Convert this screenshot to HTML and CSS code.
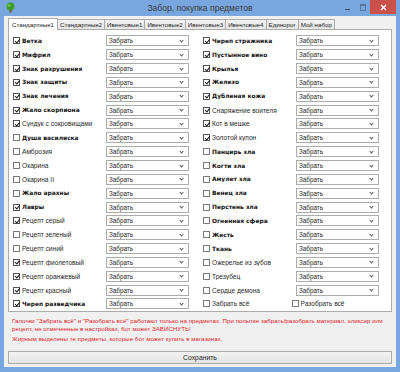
FILE: index.html
```html
<!DOCTYPE html>
<html lang="ru">
<head>
	<meta charset="UTF-8">
	<title>Забор, покупка предметов</title>
	<link rel="stylesheet" href="styles.css">
</head>

<body>
	<div class="window">
		<div class="titlebar">
			<svg class="app-icon" width="11" height="11" viewBox="0 0 11 11">
				<rect x="4.5" y="6.5" width="2" height="4" fill="#7a4a1e"/>
				<circle cx="5.5" cy="4.5" r="4" fill="#3f9a2c"/>
				<circle cx="4" cy="3.5" r="1.6" fill="#6cc24a"/>
			</svg>
			<span class="title">Забор, покупка предметов</span>
			<div class="controls">
				<span class="btn-min"></span>
				<span class="btn-max"></span>
				<span class="btn-close">
					<svg width="7" height="7" viewBox="0 0 7 7"><path d="M1 1L6 6M6 1L1 6" stroke="#fff" stroke-width="1.4"/></svg>
				</span>
			</div>
		</div>

		<div class="client">
			<div class="tabs">
				<span class="tab active">Стандартные1</span>
				<span class="tab">Стандартные2</span>
				<span class="tab">Ивентовые1</span>
				<span class="tab">Ивентовые2</span>
				<span class="tab">Ивентовые3</span>
				<span class="tab">Ивентовые4</span>
				<span class="tab">Единорог</span>
				<span class="tab">Мой набор</span>
			</div>

			<div class="panel">
				<!-- левая колонка -->
				<div class="item"><span class="box on"></span><span class="name b">Ветка</span><span class="sel">Забрать</span></div>
				<div class="item"><span class="box on"></span><span class="name b">Мифрил</span><span class="sel">Забрать</span></div>
				<div class="item"><span class="box on"></span><span class="name b">Знак разрушения</span><span class="sel">Забрать</span></div>
				<div class="item"><span class="box on"></span><span class="name b">Знак защиты</span><span class="sel">Забрать</span></div>
				<div class="item"><span class="box on"></span><span class="name b">Знак лечения</span><span class="sel">Забрать</span></div>
				<div class="item"><span class="box on"></span><span class="name b">Жало скорпиона</span><span class="sel">Забрать</span></div>
				<div class="item"><span class="box on"></span><span class="name">Сундук с сокровищами</span><span class="sel">Забрать</span></div>
				<div class="item"><span class="box"></span><span class="name b">Душа василиска</span><span class="sel">Забрать</span></div>
				<div class="item"><span class="box"></span><span class="name">Амброзия</span><span class="sel">Забрать</span></div>
				<div class="item"><span class="box"></span><span class="name">Окарина</span><span class="sel">Забрать</span></div>
				<div class="item"><span class="box"></span><span class="name">Окарина II</span><span class="sel">Забрать</span></div>
				<div class="item"><span class="box"></span><span class="name b">Жало арахны</span><span class="sel">Забрать</span></div>
				<div class="item"><span class="box on"></span><span class="name b">Лавры</span><span class="sel">Забрать</span></div>
				<div class="item"><span class="box on"></span><span class="name">Рецепт серый</span><span class="sel">Забрать</span></div>
				<div class="item"><span class="box"></span><span class="name">Рецепт зеленый</span><span class="sel">Забрать</span></div>
				<div class="item"><span class="box"></span><span class="name">Рецепт синий</span><span class="sel">Забрать</span></div>
				<div class="item"><span class="box on"></span><span class="name">Рецепт фиолетовый</span><span class="sel">Забрать</span></div>
				<div class="item"><span class="box on"></span><span class="name">Рецепт оранжевый</span><span class="sel">Забрать</span></div>
				<div class="item"><span class="box on"></span><span class="name">Рецепт красный</span><span class="sel">Забрать</span></div>
				<div class="item"><span class="box on"></span><span class="name b">Череп разведчика</span><span class="sel">Забрать</span></div>

				<!-- правая колонка -->
				<div class="item"><span class="box on"></span><span class="name b">Череп стражника</span><span class="sel">Забрать</span></div>
				<div class="item"><span class="box on"></span><span class="name b">Пустынное вино</span><span class="sel">Забрать</span></div>
				<div class="item"><span class="box on"></span><span class="name b">Крылья</span><span class="sel">Забрать</span></div>
				<div class="item"><span class="box on"></span><span class="name b">Железо</span><span class="sel">Забрать</span></div>
				<div class="item"><span class="box on"></span><span class="name b">Дубленая кожа</span><span class="sel">Забрать</span></div>
				<div class="item"><span class="box on"></span><span class="name">Снаряжение воителя</span><span class="sel">Забрать</span></div>
				<div class="item"><span class="box on"></span><span class="name">Кот в мешке</span><span class="sel">Забрать</span></div>
				<div class="item"><span class="box on"></span><span class="name">Золотой купон</span><span class="sel">Забрать</span></div>
				<div class="item"><span class="box"></span><span class="name b">Панцирь зла</span><span class="sel">Забрать</span></div>
				<div class="item"><span class="box"></span><span class="name b">Когти зла</span><span class="sel">Забрать</span></div>
				<div class="item"><span class="box"></span><span class="name b">Амулет зла</span><span class="sel">Забрать</span></div>
				<div class="item"><span class="box"></span><span class="name b">Венец зла</span><span class="sel">Забрать</span></div>
				<div class="item"><span class="box"></span><span class="name b">Перстень зла</span><span class="sel">Забрать</span></div>
				<div class="item"><span class="box"></span><span class="name b">Огненная сфера</span><span class="sel">Забрать</span></div>
				<div class="item"><span class="box"></span><span class="name b">Жесть</span><span class="sel">Забрать</span></div>
				<div class="item"><span class="box"></span><span class="name b">Ткань</span><span class="sel">Забрать</span></div>
				<div class="item"><span class="box"></span><span class="name">Ожерелье из зубов</span><span class="sel">Забрать</span></div>
				<div class="item"><span class="box"></span><span class="name">Трезубец</span><span class="sel">Забрать</span></div>
				<div class="item"><span class="box"></span><span class="name">Сердце демона</span><span class="sel">Забрать</span></div>
				<div class="item"><span class="box"></span><span class="name">Забрать всё</span><span class="box"></span><span class="name">Разобрать всё</span></div>
			</div>

			<div class="notes">
				<p class="warn">Галочки "Забрать всё" и "Разобрать всё" работают только на предметах. При попытке забрать/разобрать материал, эликсир или<br>рецепт, не отмеченные в настройках, бот может ЗАВИСНУТЬ!</p>
				<p class="warn">Жирным выделены те предметы, которые бот может купить в магазинах.</p>
			</div>

			<div class="save">Сохранить</div>
		</div>
	</div>
</body>
</html>
```

FILE: styles.css
```css
body {
	margin: 0;
	padding: 0;
	font-family: 'Liberation Sans', Arial, sans-serif;
	color: #1e1e1e;
}

.window {
	width: 400px;
	height: 372px;
	box-sizing: border-box;
	padding: 0 4px 5px;
	background: #78a7df;
	display: flex;
	flex-direction: column;
}

.titlebar {
	height: 16px;
	flex: none;
	position: relative;
	display: flex;
	align-items: center;
	justify-content: center;
}

.app-icon {
	position: absolute;
	left: 1px;
	top: 2px;
}

.title {
	font-size: 8.6px;
	color: #3a3a3a;
	padding-bottom: 1px;
}

.controls {
	position: absolute;
	top: 0;
	right: 0;
	height: 14px;
	display: flex;
	align-items: stretch;
}

.btn-min,
.btn-max {
	width: 15px;
	position: relative;
}

.btn-min::after {
	content: '';
	position: absolute;
	left: 5px;
	top: 9px;
	width: 5px;
	height: 1px;
	background: #3d4f66;
}

.btn-max::after {
	content: '';
	position: absolute;
	left: 5px;
	top: 4px;
	width: 4px;
	height: 4px;
	border: 1px solid #3d4f66;
	border-top-width: 2px;
	opacity: 0.55;
}

.btn-close {
	width: 26px;
	background: #c9504b;
	display: flex;
	align-items: center;
	justify-content: center;
}

.client {
	flex: 1;
	background: #f0f0f0;
	padding-top: 3px;
	display: flex;
	flex-direction: column;
}

.tabs {
	height: 10px;
	margin: 0 4px;
	display: flex;
	align-items: flex-end;
	position: relative;
	z-index: 1;
}

.tab {
	height: 10px;
	box-sizing: border-box;
	padding: 0 2px;
	font-size: 6.2px;
	line-height: 9px;
	border: 1px solid #acacac;
	border-bottom: none;
	border-left: none;
	background: linear-gradient(#f2f2f2, #e6e6e6);
	white-space: nowrap;
}

.tab.active {
	height: 12px;
	line-height: 11px;
	background: #fff;
	border-left: 1px solid #acacac;
	margin-bottom: -1px;
	padding: 0 3px;
}

.panel {
	margin: 0 4px;
	height: 283px;
	box-sizing: border-box;
	border: 1px solid #acacac;
	background: #fff;
	padding: 4px 0 0 4px;
	display: grid;
	grid-template-columns: 177px 177px;
	grid-template-rows: repeat(20, 13.85px);
	grid-auto-flow: column;
	column-gap: 13px;
}

.item {
	display: flex;
	align-items: center;
}

.box {
	width: 7px;
	height: 7px;
	flex: none;
	box-sizing: border-box;
	border: 1px solid #7a7a7a;
	background: #fff;
	position: relative;
}

.box.on {
	border-color: #555;
}

.box.on::after {
	content: '';
	position: absolute;
	left: 1.6px;
	top: -0.6px;
	width: 1.6px;
	height: 3.8px;
	border: solid #1a1a1a;
	border-width: 0 1.3px 1.3px 0;
	transform: rotate(40deg);
}

.name {
	width: 86px;
	box-sizing: border-box;
	padding-left: 2px;
	font-size: 6.6px;
	color: #2a2a2a;
	white-space: nowrap;
	overflow: hidden;
}

.name.b {
	font-family: 'DejaVu Sans', Verdana, sans-serif;
	font-weight: bold;
	font-size: 5.9px;
	color: #111;
}

.sel {
	width: 83px;
	height: 11px;
	box-sizing: border-box;
	border: 1px solid #acacac;
	background: #fff;
	font-size: 6.3px;
	line-height: 9px;
	padding-left: 2px;
	position: relative;
}

.sel::after {
	content: '';
	position: absolute;
	right: 5px;
	top: 2.5px;
	width: 2px;
	height: 2px;
	border: solid #555;
	border-width: 0 1px 1px 0;
	transform: rotate(45deg);
}

.notes {
	padding: 5px 0 0 8px;
}

.warn {
	margin: 0;
	font-size: 6.2px;
	line-height: 8px;
	color: #e0252e;
}

.warn + .warn {
	margin-top: 1.5px;
}

.save {
	margin: 8px 4px 0;
	height: 13px;
	box-sizing: border-box;
	border: 1px solid #acacac;
	background: linear-gradient(#f2f2f2, #e4e4e4);
	font-size: 6.8px;
	line-height: 11px;
	text-align: center;
	color: #1e1e1e;
}
```
